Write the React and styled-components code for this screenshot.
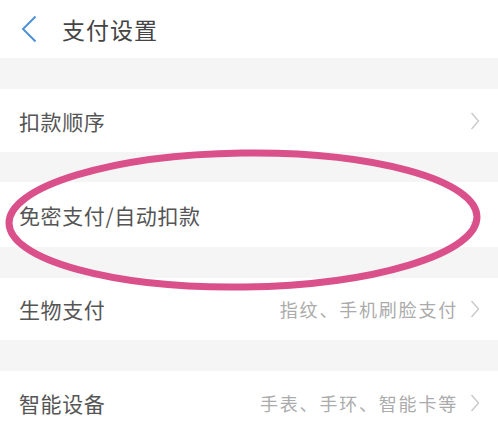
import React from 'react';
import styled, { createGlobalStyle } from 'styled-components';

const GlobalStyle = createGlobalStyle`
    html, body {
        margin: 0;
        padding: 0;
        background: #ffffff;
    }
    body {
        font-family: "Noto Sans CJK SC", "Noto Sans", sans-serif;
    }
`;

const Page = styled.div`
    position: relative;
    width: 498px;
    height: 429px;
    overflow: hidden;
    background: #f5f5f5;
`;

const Header = styled.div`
    height: 58px;
    display: flex;
    align-items: center;
    background: #ffffff;
    padding-left: 21px;
`;

const BackButton = styled.div`
    width: 18px;
    height: 28px;
    display: flex;
    align-items: center;
    margin-right: 23px;
`;

const Title = styled.h1`
    margin: 0;
    font-size: 23px;
    font-weight: 400;
    color: #444444;
    letter-spacing: 1px;
`;

const Gap = styled.div`
    height: ${({ size }) => size}px;
`;

const Row = styled.div`
    height: ${({ size }) => size}px;
    display: flex;
    align-items: center;
    justify-content: space-between;
    background: #ffffff;
    padding: 0 18px 0 19px;
`;

const Label = styled.span`
    font-size: 21px;
    color: #555555;
    letter-spacing: 0.6px;
`;

const Side = styled.div`
    display: flex;
    align-items: center;
    gap: 12px;
`;

const Hint = styled.span`
    font-size: 18px;
    color: #ababab;
    letter-spacing: 1.8px;
`;

const Mark = styled.svg`
    position: absolute;
    left: 0;
    top: 145px;
    pointer-events: none;
`;

const Chevron = () => (
    <svg width="10" height="20" viewBox="0 0 10 20">
        <path d="M1.5 2 L8.5 10 L1.5 18" fill="none" stroke="#c9c9c9" strokeWidth="1.4" />
    </svg>
);

const rows = [
    { label: '扣款顺序', size: 63, after: 30 },
    { label: '免密支付/自动扣款', size: 65, after: 31 },
    { label: '生物支付', hint: '指纹、手机刷脸支付', size: 62, after: 31 },
    { label: '智能设备', hint: '手表、手环、智能卡等', size: 63, after: 0 }
];

const App = () => (
    <Page>
        <GlobalStyle />
        <Header>
            <BackButton>
                <svg width="16" height="28" viewBox="0 0 16 28">
                    <path d="M14.5 1.5 L2 14 L14.5 26.5" fill="none" stroke="#4a8fd8" strokeWidth="1.9" />
                </svg>
            </BackButton>
            <Title>支付设置</Title>
        </Header>
        <Gap size={31} />
        {rows.map((row) => (
            <React.Fragment key={row.label}>
                <Row size={row.size}>
                    <Label>{row.label}</Label>
                    <Side>
                        {row.hint && <Hint>{row.hint}</Hint>}
                        <Chevron />
                    </Side>
                </Row>
                {row.after > 0 && <Gap size={row.after} />}
            </React.Fragment>
        ))}
        <Mark width="498" height="150" viewBox="0 0 498 150">
            <ellipse
                cx="243"
                cy="75"
                rx="234"
                ry="67"
                fill="none"
                stroke="#d9508b"
                strokeWidth="7"
                transform="rotate(-0.8 243 75)"
            />
        </Mark>
    </Page>
);

export default App;
